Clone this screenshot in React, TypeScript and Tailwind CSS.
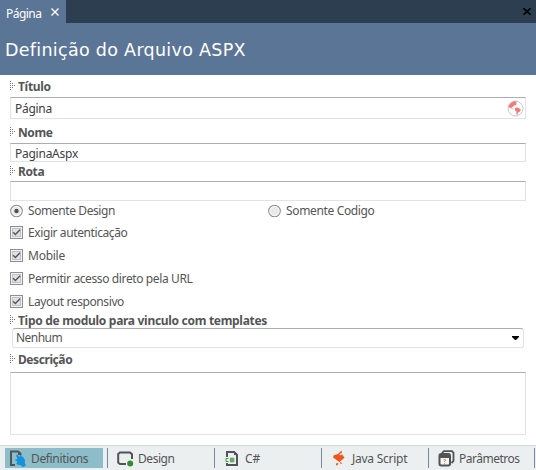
import type { ReactNode } from "react";

function Grip() {
  return (
    <svg className="mr-[3px] h-[10px] w-[5px] shrink-0 -translate-y-px" viewBox="0 0 5 10" shapeRendering="crispEdges" fill="#777">
      <path d="M0 0h1v1H0zM0 2h1v1H0zM0 4h1v1H0zM0 6h1v1H0zM0 8h1v1H0zM2 2h1v1H2zM2 4h1v1H2zM2 6h1v1H2zM4 4h1v1H4z" />
    </svg>
  );
}

function Label({ children, className }: { children: ReactNode; className: string }) {
  return (
    <div className={`flex items-center font-bold text-[#555] ${className}`}>
      <Grip />
      <span>{children}</span>
    </div>
  );
}

function Check({ children, className }: { children: ReactNode; className: string }) {
  return (
    <label className="flex h-[23px] items-center">
      <svg className="mr-[5px] size-[13px]" viewBox="0 0 13 13">
        <rect x=".5" y=".5" width="12" height="12" fill="#f1f1f1" stroke="#8e8f8f" />
        <rect x="2.5" y="2.5" width="8" height="8" fill="#dfe1e4" stroke="#bfc2c6" />
        <path d="M3.2 6.2L5.4 8.6L10 3.8" fill="none" stroke="#50545a" strokeWidth="1.4" />
      </svg>
      <span className={className}>{children}</span>
    </label>
  );
}

function Radio({ checked }: { checked?: boolean }) {
  return (
    <svg className="mr-[5px] size-[13px] translate-y-[0.5px]" viewBox="0 0 13 13">
      <circle cx="6.5" cy="6.5" r="5.8" fill="#f2f2f2" stroke="#8c8c8c" strokeWidth="1.1" />
      <circle cx="6.5" cy="6.5" r="4.5" fill="#e9e9e9" stroke="#fafafa" strokeWidth=".8" />
      {checked && <circle cx="6.5" cy="6.5" r="2.2" fill="#505050" />}
    </svg>
  );
}

const box = "border border-[#e2e3ea] border-t-[#abadb3] bg-white";

export default function App() {
  return (
    <div className="flex h-[470px] w-[536px] flex-col overflow-hidden bg-white font-['Noto_Sans',sans-serif] text-[12px] leading-[16px] text-[#555]">
      <div className="flex h-[23px] shrink-0 justify-between bg-[#2d3e50]">
        <div className="flex w-[66px] items-center bg-[#5b7596] pt-[4px] pl-[6px] text-white">
          <span className="w-[45px] tracking-[-0.55px]">Página</span>
          <svg className="size-[8px] -translate-y-[2px]" viewBox="0 0 8 8"><path d="M.5.5l7 7M7.5.5l-7 7" stroke="#fff" strokeWidth="1.4" /></svg>
        </div>
        <svg className="mt-[8px] mr-[5px] h-[7px] w-[8px]" viewBox="0 0 8 7"><path d="M.5.3l7 6.4M7.5.3l-7 6.4" stroke="#000" strokeWidth="1.6" /></svg>
      </div>
      <h1 className="flex h-[52px] shrink-0 items-center bg-[#5b7596] pt-[2px] pl-[5px] font-['DejaVu_Sans',sans-serif] text-[17.5px] tracking-[0.3px] text-white">Definição do Arquivo ASPX</h1>
      <main className="flex h-[370px] shrink-0 flex-col px-[10px]">
        <Label className="h-[22px] pt-[2px] tracking-[-0.3px]">Título</Label>
        <div className={`flex h-[22px] items-center justify-between pr-[1px] pl-[4px] text-[#404040] ${box}`}>
          <span className="translate-y-px tracking-[-0.3px]">Página</span>
          <svg className="size-[17px]" viewBox="0 0 17 17">
            <circle cx="8.5" cy="8.5" r="7.5" fill="#fdfdfd" stroke="#c9c9c9" />
            <path d="M1.5 7L2 5L4 2.7L7 1.2L10 1.5L9 3.2L10 4L8 5.5L6.8 5.5L6 7L4.7 7L4.8 8.2L7 9L5.8 9.2L3 7.8ZM8 8.3L10 7.3L13.8 9.3L13 11.5L11.2 12.5L10.3 15L9.4 14.2L9.5 11.8L7.9 10.3Z" fill="#f47c76" />
          </svg>
        </div>
        <Label className="h-[24px] pt-[4px] tracking-[-0.4px]">Nome</Label>
        <div className={`flex h-[19px] items-center pl-[4px] text-[#404040] ${box}`}><span className="translate-y-px tracking-[-0.25px]">PaginaAspx</span></div>
        <Label className="h-[19px] tracking-[-0.4px]">Rota</Label>
        <div className={`h-[20px] ${box}`} />
        <div className="flex h-[20px] items-center pb-[1px]">
          <label className="flex w-[258px] items-center"><Radio checked /><span className="tracking-[-0.4px]">Somente Design</span></label>
          <label className="flex items-center"><Radio /><span className="tracking-[-0.35px]">Somente Codigo</span></label>
        </div>
        <Check className="tracking-[-0.4px]">Exigir autenticação</Check>
        <Check className="tracking-[-0.25px]">Mobile</Check>
        <Check className="tracking-[-0.38px]">Permitir acesso direto pela URL</Check>
        <Check className="tracking-[-0.4px]">Layout responsivo</Check>
        <Label className="h-[15px] pt-[1px] tracking-[-0.3px]">Tipo de modulo para vinculo com templates</Label>
        <div className={`mr-[2px] ml-[2px] flex h-[20px] items-center justify-between rounded-[3px] pr-[4px] pl-[3px] ${box}`}>
          <span className="tracking-[-0.55px]">Nenhum</span>
          <svg className="h-[4px] w-[7px]" viewBox="0 0 7 4"><path d="M0 0h7v1L4 4H3L0 1z" /></svg>
        </div>
        <Label className="h-[24px] tracking-[-0.42px]">Descrição</Label>
        <div className={`h-[63px] ${box}`} />
      </main>
      <footer className="flex h-[25px] shrink-0 border-t border-[#d5d9d9] bg-[#ebefef] pt-[2px] pl-[5px]">
        <div className="flex h-[20px] w-[98px] items-center bg-[#8cbdc9] pl-[4px]">
          <svg className="mr-[5px] size-[17px]" viewBox="0 0 17 17">
            <path d="M12 4L9 1.5H2V15H6" fill="none" stroke="#505457" strokeWidth="2" />
            <path d="M9 1L13 5H9Z" fill="#505457" />
            <path d="M7 5.2L8.3 4.5L10.5 7L10.8 5.2L12 5.1L13.2 7L14.3 6.8L15 9L16 9.5L15.8 13L17 15.5L14 17L12 15.5L8 14.5L7.2 13L8.5 12.3L6.3 10L6.4 9L8.5 9.4Z" fill="#1493dc" />
          </svg>
          <span className="translate-y-px tracking-[-0.35px]">Definitions</span>
        </div>
        <div className="ml-[4px] flex h-[20px] w-[107px] items-center border-l border-[#7a8699] pl-[9px]">
          <svg className="mr-[4px] h-[17px] w-[17px]" viewBox="0 0 17 17">
            <path d="M9 14H3L1.2 12.5V4L3 2.5H13L15 4.3V9" fill="none" stroke="#505457" strokeWidth="2" />
            <circle cx="13.2" cy="13.5" r="3" fill="#318c36" />
          </svg>
          <span className="translate-y-px tracking-[-0.45px]">Design</span>
        </div>
        <div className="flex h-[20px] w-[107px] items-center border-l border-[#7a8699] pl-[10px]">
          <svg className="mr-[6px] h-[17px] w-[14px]" viewBox="0 0 14 17">
            <path d="M2 7V2H9L12 5V15H2V13" fill="none" stroke="#505457" strokeWidth="2" />
            <path d="M9 1L13 5H9Z" fill="#505457" />
            <path d="M3.5 8.5H1V11.5H3.5M6 7.5V12.5M8 7.5V12.5M4.8 9H9.5M4.8 11H9.5" fill="none" stroke="#318c36" strokeWidth=".9" />
          </svg>
          <span className="translate-y-px">C#</span>
        </div>
        <div className="flex h-[20px] w-[107px] items-center border-l border-[#7a8699] pl-[11px]">
          <svg className="mr-[7px] h-[16px] w-[12px]" viewBox="0 0 12 16">
            <path d="M8.5 .5L9 2.5L6.2 4.6L7.2 5.6L9 4.2L11.5 7.8L6.5 12L0 7.5L.8 5.2L5 4ZM7 12L9.5 13.2L7.5 14ZM3 13.2H5.5L4.5 15.2H3Z" fill="#f3541b" />
          </svg>
          <span className="translate-y-px tracking-[-0.25px]">Java Script</span>
        </div>
        <div className="flex h-[20px] w-[107px] items-center border-x border-[#7a8699] pl-[9px]">
          <svg className="mr-[4px] size-[17px]" viewBox="0 0 17 17">
            <path d="M4 3L6 1.2H14L15.5 2.8V11L13.5 13" fill="none" stroke="#505457" strokeWidth="1.8" />
            <rect x="1.5" y="4" width="10.5" height="11.5" rx="1.7" fill="#f3f4f4" stroke="#505457" strokeWidth="2" />
            <path d="M2 4h10v4H2z" fill="#505457" />
            <path d="M5.5 9.5H7.5V11H6.5V12M6.5 13V14" fill="none" stroke="#d99b5b" />
          </svg>
          <span className="translate-y-px tracking-[-0.5px]">Parâmetros</span>
        </div>
      </footer>
    </div>
  );
}
